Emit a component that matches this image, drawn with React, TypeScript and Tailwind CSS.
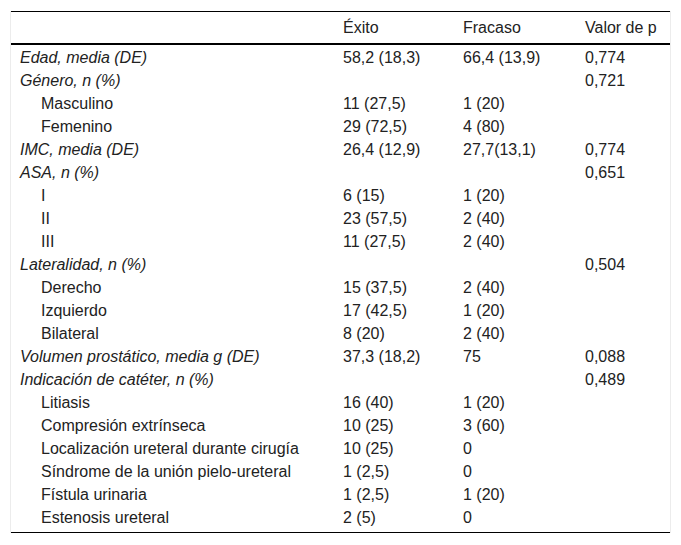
import React from 'react';

type Row = {
  label: string,
  indent?: boolean,
  exito?: string,
  fracaso?: string,
  p?: string,
}

const rows: Row[] = [
  { label: 'Edad, media (DE)', exito: '58,2 (18,3)', fracaso: '66,4 (13,9)', p: '0,774' },
  { label: 'Género, n (%)', p: '0,721' },
  { label: 'Masculino', indent: true, exito: '11 (27,5)', fracaso: '1 (20)' },
  { label: 'Femenino', indent: true, exito: '29 (72,5)', fracaso: '4 (80)' },
  { label: 'IMC, media (DE)', exito: '26,4 (12,9)', fracaso: '27,7(13,1)', p: '0,774' },
  { label: 'ASA, n (%)', p: '0,651' },
  { label: 'I', indent: true, exito: '6 (15)', fracaso: '1 (20)' },
  { label: 'II', indent: true, exito: '23 (57,5)', fracaso: '2 (40)' },
  { label: 'III', indent: true, exito: '11 (27,5)', fracaso: '2 (40)' },
  { label: 'Lateralidad, n (%)', p: '0,504' },
  { label: 'Derecho', indent: true, exito: '15 (37,5)', fracaso: '2 (40)' },
  { label: 'Izquierdo', indent: true, exito: '17 (42,5)', fracaso: '1 (20)' },
  { label: 'Bilateral', indent: true, exito: '8 (20)', fracaso: '2 (40)' },
  { label: 'Volumen prostático, media g (DE)', exito: '37,3 (18,2)', fracaso: '75', p: '0,088' },
  { label: 'Indicación de catéter, n (%)', p: '0,489' },
  { label: 'Litiasis', indent: true, exito: '16 (40)', fracaso: '1 (20)' },
  { label: 'Compresión extrínseca', indent: true, exito: '10 (25)', fracaso: '3 (60)' },
  { label: 'Localización ureteral durante cirugía', indent: true, exito: '10 (25)', fracaso: '0' },
  { label: 'Síndrome de la unión pielo-ureteral', indent: true, exito: '1 (2,5)', fracaso: '0' },
  { label: 'Fístula urinaria', indent: true, exito: '1 (2,5)', fracaso: '1 (20)' },
  { label: 'Estenosis ureteral', indent: true, exito: '2 (5)', fracaso: '0' },
];

const cols = 'grid grid-cols-[322px_120px_122px_1fr]';

export default function App() {
  return (
    <div className="bg-white w-[681px] h-[545px] pt-[11px] px-[10px] font-['Liberation_Sans',Arial,sans-serif] text-[16px] text-[#222]">
      <div className="border-x border-[#ececec]">
        <div className={`${cols} h-[34px] pt-[1px] items-center border-t border-black border-b-2`}>
          <div />
          <div className="pl-[10px]">Éxito</div>
          <div className="pl-[10px]">Fracaso</div>
          <div className="pl-[10px]">Valor de p</div>
        </div>
        <div className="pb-[4px] border-b border-black">
          {rows.map((r, i) => (
            <div key={i} className={`${cols} h-[23px] pt-[1px] items-center`}>
              <div className={r.indent ? 'pl-[30px]' : 'pl-[9px] italic'}>{r.label}</div>
              <div className="pl-[10px]">{r.exito}</div>
              <div className="pl-[10px]">{r.fracaso}</div>
              <div className="pl-[10px]">{r.p}</div>
            </div>
          ))}
        </div>
      </div>
    </div>
  );
}
